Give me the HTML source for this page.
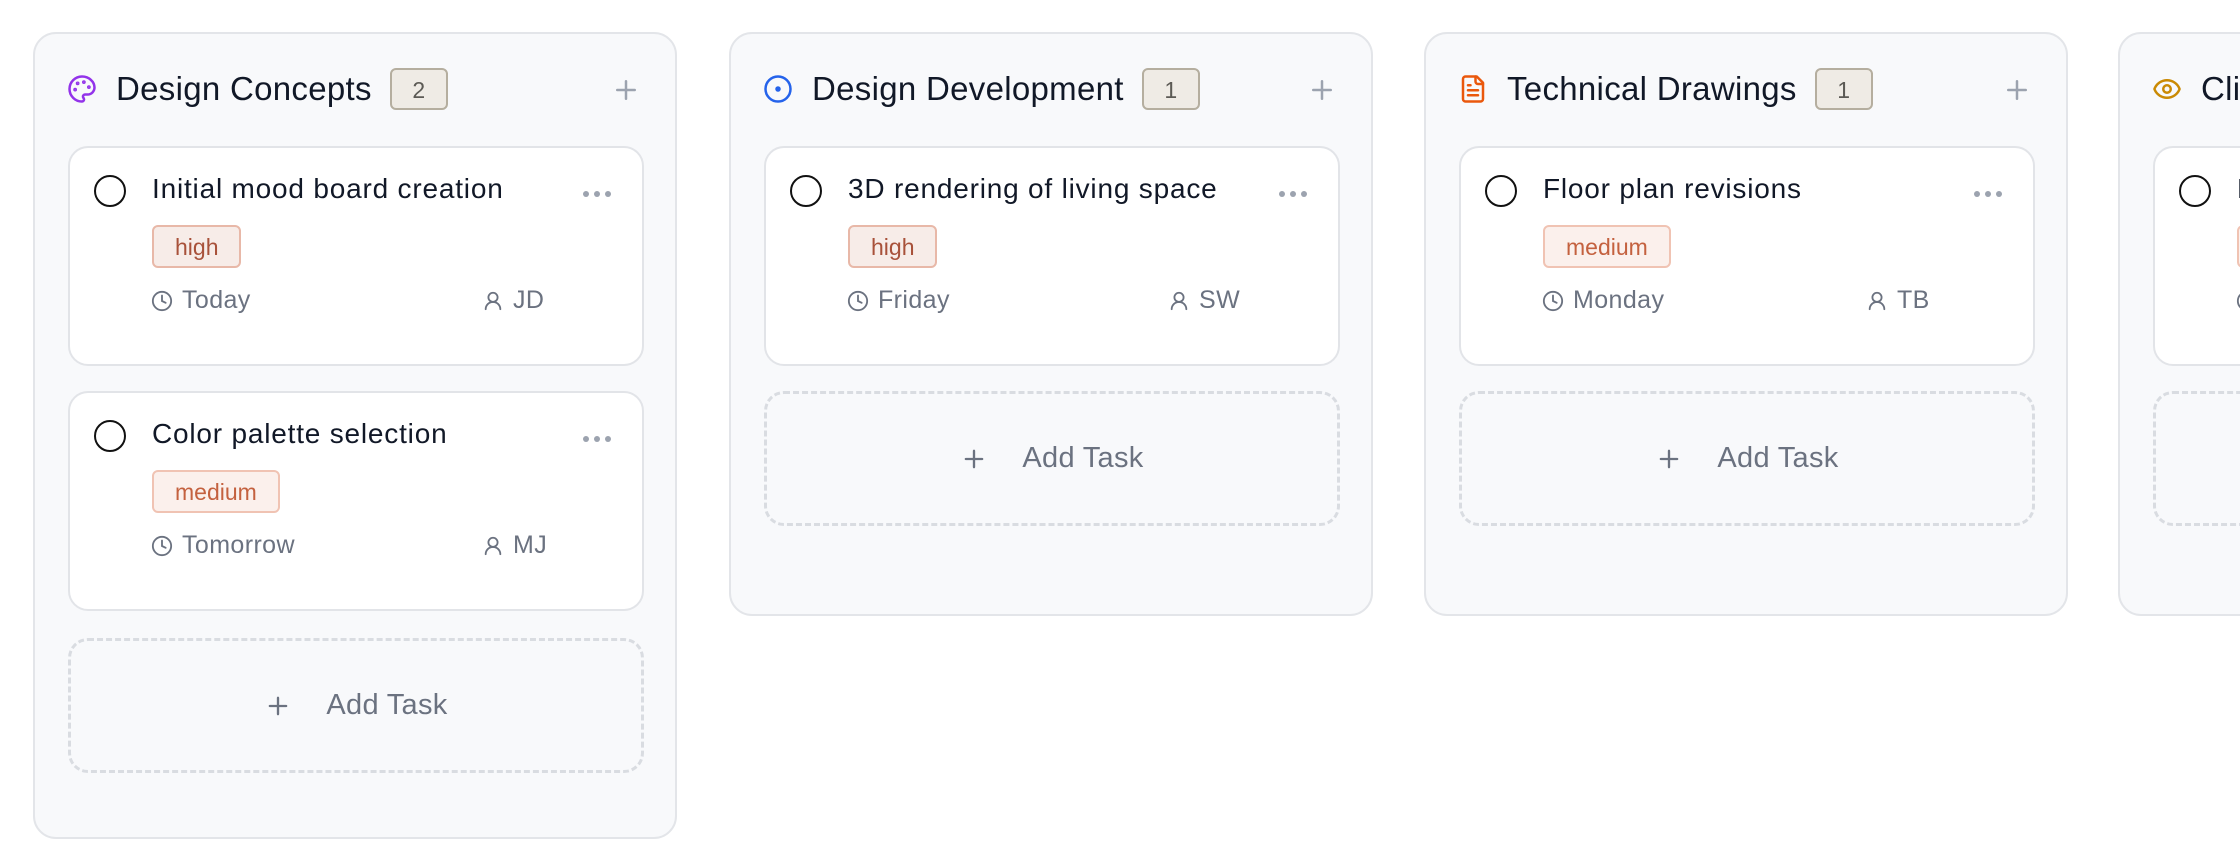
<!DOCTYPE html>
<html><head><meta charset="utf-8"><style>
*{box-sizing:border-box;margin:0;padding:0}
html,body{width:2240px;height:856px;overflow:hidden;background:#fff;font-family:"Liberation Sans",sans-serif}
.col{position:absolute;top:32px;width:644px;background:#f8f9fb;border:2px solid #e3e5e9;border-radius:23px;overflow:hidden}
.hico{position:absolute;left:32px;top:40px;width:30px;height:30px}
.title{position:absolute;left:81px;top:55px;transform:translateY(-50%);font-size:33px;letter-spacing:0.3px;color:#111827;white-space:nowrap;display:flex;align-items:center}
.badge{display:inline-block;margin-left:18px;width:58px;height:42px;line-height:40px;text-align:center;background:#efebe5;border:2px solid #b5ae9f;border-radius:6px;color:#5c5a55;font-size:23px;letter-spacing:0}
.plus{position:absolute;left:576px;top:41px;width:30px;height:30px}
.card{position:absolute;left:33px;width:576px;height:220px;background:#fff;border:2px solid #e2e4e8;border-radius:20px}
.chk{position:absolute;left:24px;top:27px;width:32px;height:32px;border:2.5px solid #111;border-radius:50%}
.ct{position:absolute;left:82px;top:25px;font-size:28px;letter-spacing:0.8px;color:#111827;white-space:nowrap}
.dots{position:absolute;left:512px;top:42px;width:30px;height:8px}
.tag{position:absolute;left:82px;top:77px;height:43px;line-height:40px;padding:0 21px;border:2px solid #e8b8a8;border-radius:6px;background:#f7ece8;color:#a8513a;font-size:23px}
.tag.m{background:#fbf0ec;border-color:#f0c3b3;color:#c4613f}
.meta{position:absolute;top:138px;font-size:25px;letter-spacing:0.4px;color:#6b7280;display:flex;align-items:center;white-space:nowrap}
.meta svg{width:22px;height:22px;margin-right:9px}
.add{position:absolute;left:33px;width:576px;height:135px;border:3px dashed #d9dce1;border-radius:20px;display:flex;align-items:center;justify-content:center;color:#6b7280;font-size:29px;letter-spacing:0.3px}
.add svg{width:28px;height:28px;margin-right:34px}
</style></head><body>

<!-- Column 1 -->
<div class="col" style="left:33px;height:807px">
 <svg class="hico" viewBox="0 0 24 24" fill="none" stroke="#9333ea" stroke-width="2" stroke-linecap="round" stroke-linejoin="round"><circle cx="13.5" cy="6.5" r=".5" fill="#9333ea"/><circle cx="17.5" cy="10.5" r=".5" fill="#9333ea"/><circle cx="8.5" cy="7.5" r=".5" fill="#9333ea"/><circle cx="6.5" cy="12.5" r=".5" fill="#9333ea"/><path d="M12 2C6.5 2 2 6.5 2 12s4.5 10 10 10c.926 0 1.648-.746 1.648-1.688 0-.437-.18-.835-.437-1.125-.29-.289-.438-.652-.438-1.125a1.64 1.64 0 0 1 1.668-1.668h1.996c3.051 0 5.555-2.503 5.555-5.554C21.965 6.012 17.461 2 12 2z"/></svg>
 <div class="title">Design Concepts<span class="badge">2</span></div>
 <svg class="plus" viewBox="0 0 24 24" fill="none" stroke="#9ca3af" stroke-width="2" stroke-linecap="round"><path d="M5 12h14M12 5v14"/></svg>

 <div class="card" style="top:112px">
  <div class="chk"></div><div class="ct">Initial mood board creation</div>
  <svg class="dots" viewBox="0 0 30 8"><circle cx="4" cy="4" r="3" fill="#9ca3af"/><circle cx="15" cy="4" r="3" fill="#9ca3af"/><circle cx="26" cy="4" r="3" fill="#9ca3af"/></svg>
  <div class="tag">high</div>
  <div class="meta" style="left:81px"><svg viewBox="0 0 24 24" fill="none" stroke="#6b7280" stroke-width="2" stroke-linecap="round"><circle cx="12" cy="12" r="10"/><path d="M12 6v6l4 2"/></svg>Today</div>
  <div class="meta" style="left:412px"><svg viewBox="0 0 24 24" fill="none" stroke="#6b7280" stroke-width="2" stroke-linecap="round"><circle cx="12" cy="8" r="5"/><path d="M20 21a8 8 0 0 0-16 0"/></svg>JD</div>
 </div>

 <div class="card" style="top:357px">
  <div class="chk"></div><div class="ct">Color palette selection</div>
  <svg class="dots" viewBox="0 0 30 8"><circle cx="4" cy="4" r="3" fill="#9ca3af"/><circle cx="15" cy="4" r="3" fill="#9ca3af"/><circle cx="26" cy="4" r="3" fill="#9ca3af"/></svg>
  <div class="tag m">medium</div>
  <div class="meta" style="left:81px"><svg viewBox="0 0 24 24" fill="none" stroke="#6b7280" stroke-width="2" stroke-linecap="round"><circle cx="12" cy="12" r="10"/><path d="M12 6v6l4 2"/></svg>Tomorrow</div>
  <div class="meta" style="left:412px"><svg viewBox="0 0 24 24" fill="none" stroke="#6b7280" stroke-width="2" stroke-linecap="round"><circle cx="12" cy="8" r="5"/><path d="M20 21a8 8 0 0 0-16 0"/></svg>MJ</div>
 </div>

 <div class="add" style="top:604px"><svg viewBox="0 0 24 24" fill="none" stroke="#6b7280" stroke-width="2" stroke-linecap="round"><path d="M5 12h14M12 5v14"/></svg>Add Task</div>
</div>

<!-- Column 2 -->
<div class="col" style="left:729px;height:584px">
 <svg class="hico" viewBox="0 0 24 24" fill="none" stroke="#2563eb" stroke-width="2"><circle cx="12" cy="12" r="10"/><circle cx="12" cy="12" r="1.2" fill="#2563eb"/></svg>
 <div class="title">Design Development<span class="badge">1</span></div>
 <svg class="plus" viewBox="0 0 24 24" fill="none" stroke="#9ca3af" stroke-width="2" stroke-linecap="round"><path d="M5 12h14M12 5v14"/></svg>
 <div class="card" style="top:112px">
  <div class="chk"></div><div class="ct">3D rendering of living space</div>
  <svg class="dots" viewBox="0 0 30 8"><circle cx="4" cy="4" r="3" fill="#9ca3af"/><circle cx="15" cy="4" r="3" fill="#9ca3af"/><circle cx="26" cy="4" r="3" fill="#9ca3af"/></svg>
  <div class="tag">high</div>
  <div class="meta" style="left:81px"><svg viewBox="0 0 24 24" fill="none" stroke="#6b7280" stroke-width="2" stroke-linecap="round"><circle cx="12" cy="12" r="10"/><path d="M12 6v6l4 2"/></svg>Friday</div>
  <div class="meta" style="left:402px"><svg viewBox="0 0 24 24" fill="none" stroke="#6b7280" stroke-width="2" stroke-linecap="round"><circle cx="12" cy="8" r="5"/><path d="M20 21a8 8 0 0 0-16 0"/></svg>SW</div>
 </div>
 <div class="add" style="top:357px"><svg viewBox="0 0 24 24" fill="none" stroke="#6b7280" stroke-width="2" stroke-linecap="round"><path d="M5 12h14M12 5v14"/></svg>Add Task</div>
</div>

<!-- Column 3 -->
<div class="col" style="left:1424px;height:584px">
 <svg class="hico" viewBox="0 0 24 24" fill="none" stroke="#ea580c" stroke-width="2" stroke-linecap="round" stroke-linejoin="round"><path d="M15 2H6a2 2 0 0 0-2 2v16a2 2 0 0 0 2 2h12a2 2 0 0 0 2-2V7z"/><path d="M14 2v4a2 2 0 0 0 2 2h4M10 9H8M16 13H8M16 17H8"/></svg>
 <div class="title">Technical Drawings<span class="badge">1</span></div>
 <svg class="plus" viewBox="0 0 24 24" fill="none" stroke="#9ca3af" stroke-width="2" stroke-linecap="round"><path d="M5 12h14M12 5v14"/></svg>
 <div class="card" style="top:112px">
  <div class="chk"></div><div class="ct">Floor plan revisions</div>
  <svg class="dots" viewBox="0 0 30 8"><circle cx="4" cy="4" r="3" fill="#9ca3af"/><circle cx="15" cy="4" r="3" fill="#9ca3af"/><circle cx="26" cy="4" r="3" fill="#9ca3af"/></svg>
  <div class="tag m">medium</div>
  <div class="meta" style="left:81px"><svg viewBox="0 0 24 24" fill="none" stroke="#6b7280" stroke-width="2" stroke-linecap="round"><circle cx="12" cy="12" r="10"/><path d="M12 6v6l4 2"/></svg>Monday</div>
  <div class="meta" style="left:405px"><svg viewBox="0 0 24 24" fill="none" stroke="#6b7280" stroke-width="2" stroke-linecap="round"><circle cx="12" cy="8" r="5"/><path d="M20 21a8 8 0 0 0-16 0"/></svg>TB</div>
 </div>
 <div class="add" style="top:357px"><svg viewBox="0 0 24 24" fill="none" stroke="#6b7280" stroke-width="2" stroke-linecap="round"><path d="M5 12h14M12 5v14"/></svg>Add Task</div>
</div>

<!-- Column 4 (clipped) -->
<div class="col" style="left:2118px;height:584px">
 <svg class="hico" viewBox="0 0 24 24" fill="none" stroke="#ca8a04" stroke-width="2" stroke-linecap="round" stroke-linejoin="round"><path d="M2.06 12.35a1 1 0 0 1 0-.7 10.75 10.75 0 0 1 19.88 0 1 1 0 0 1 0 .7 10.75 10.75 0 0 1-19.88 0"/><circle cx="12" cy="12" r="3"/></svg>
 <div class="title">Client Review<span class="badge">1</span></div>
 <div class="card" style="top:112px">
  <div class="chk"></div><div class="ct">Final presentation</div>
  <div class="tag m">medium</div>
  <div class="meta" style="left:81px"><svg viewBox="0 0 24 24" fill="none" stroke="#6b7280" stroke-width="2" stroke-linecap="round"><circle cx="12" cy="12" r="10"/><path d="M12 6v6l4 2"/></svg>Friday</div>
 </div>
 <div class="add" style="top:357px">Add Task</div>
</div>
</body></html>
